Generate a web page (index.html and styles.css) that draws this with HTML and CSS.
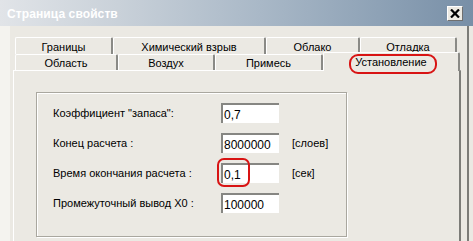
FILE: index.html
```html
<!DOCTYPE html>
<html lang="ru">
<head>
<meta charset="utf-8">
<title>Страница свойств</title>
<link rel="stylesheet" href="styles.css">
</head>
<body>
<div class="window">
  <div class="titlebar">
    <span class="title">Страница свойств</span>
    <span class="close"><svg width="10" height="9" viewBox="0 0 10 9"><path d="M1 0.5 L9 8.5 M9 0.5 L1 8.5" stroke="#000" stroke-width="2.2" fill="none"/></svg></span>
  </div>
  <div class="body">
    <div class="frame-left"></div>
    <div class="main">
      <div class="tabrow row1">
        <div class="tab w98">Границы</div>
        <div class="tab w153">Химический взрыв</div>
        <div class="tab w94">Облако</div>
        <div class="tab w97">Отладка</div>
      </div>
      <div class="tabrow row2">
        <div class="tab w103">Область</div>
        <div class="tab w97">Воздух</div>
        <div class="tab w108">Примесь</div>
        <div class="tab selected w137">Установление<span class="mark mark-tab"></span></div>
      </div>
      <div class="panel">
        <div class="group">
          <div class="form">
            <div class="label">Коэффициент "запаса":</div>
            <div class="field">0,7</div>
            <div class="unit"></div>

            <div class="label">Конец расчета :</div>
            <div class="field">8000000</div>
            <div class="unit">[слоев]</div>

            <div class="label">Время окончания расчета :</div>
            <div class="field">0,1<span class="mark mark-field"></span></div>
            <div class="unit">[сек]</div>

            <div class="label">Промежуточный вывод X0 :</div>
            <div class="field">100000</div>
            <div class="unit"></div>
          </div>
        </div>
      </div>
    </div>
    <div class="frame-gap"></div>
    <div class="frame-right"></div>
  </div>
</div>
</body>
</html>
```

FILE: styles.css
```css
html, body {
  margin: 0;
  padding: 0;
}
body {
  width: 473px;
  height: 241px;
  overflow: hidden;
  background: #ebe9e3;
  font-family: "Liberation Sans", Arial, sans-serif;
  font-size: 11px;
  color: #000;
}
.window {
  display: flex;
  flex-direction: column;
  height: 241px;
}
.titlebar {
  height: 26px;
  flex: 0 0 26px;
  display: flex;
  align-items: center;
  justify-content: space-between;
  padding: 0 10px 0 7px;
  background: linear-gradient(90deg, #e1e4e8 0%, #c9d1d9 25%, #a9b8c7 55%, #8ea2b6 80%, #788fa7 100%);
}
.title {
  color: #fff;
  font-weight: bold;
  font-size: 12px;
  letter-spacing: 0.1px;
  margin-top: 1px;
}
.close {
  width: 14px;
  height: 13px;
  display: flex;
  align-items: center;
  justify-content: center;
  background: #ece9e2;
  border-top: 1px solid #fff;
  border-left: 1px solid #fff;
  border-right: 1px solid #6f6f6f;
  border-bottom: 1px solid #6f6f6f;
  margin-top: 1px;
}
.body {
  flex: 1;
  display: flex;
  min-height: 0;
}
.frame-left {
  width: 10px;
  background: #f4f3ef;
  margin-right: 3px;
}
.main {
  width: 448px;
  padding-top: 11px;
  display: flex;
  flex-direction: column;
}
.tabrow {
  display: flex;
  padding-left: 2px;
}
.row1 {
  height: 17px;
}
.row2 {
  height: 16px;
  position: relative;
  z-index: 1;
}
.tab {
  box-sizing: border-box;
  display: flex;
  align-items: center;
  justify-content: center;
  border-top: 1px solid #fff;
  border-left: 1px solid #fff;
  border-right: 2px solid #8a8a86;
  border-radius: 2px 2px 0 0;
  background: #ebe9e3;
  padding-top: 1px;
}
.w98 { width: 98px; }
.w153 { width: 153px; }
.w94 { width: 94px; }
.w97 { width: 97px; }
.w103 { width: 103px; }
.w108 { width: 108px; }
.w137 { width: 137px; }
.tab.selected {
  position: relative;
  margin-top: -2px;
  height: 19px;
  margin-bottom: -1px;
  padding-top: 0;
}
.mark {
  position: absolute;
  box-sizing: border-box;
  border: 2px solid #d81414;
  pointer-events: none;
}
.mark-tab {
  left: 25px;
  top: 1px;
  width: 88px;
  height: 20px;
  border-radius: 9px;
}
.panel {
  flex: 1;
  box-sizing: border-box;
  border-top: 1px solid #fff;
  border-left: 1px solid #fff;
  border-right: 2px solid #7c7c78;
  padding: 21px 0 0 22px;
}
.group {
  box-sizing: border-box;
  width: 311px;
  height: 145px;
  border: 1px solid #a9a79f;
  box-shadow: inset 1px 1px 0 #fff, 1px 1px 0 #fff;
  padding: 10px 0 0 16px;
}
.form {
  display: grid;
  grid-template-columns: 168px 58px auto;
  grid-auto-rows: 20px;
  row-gap: 10px;
  align-items: center;
}
.label {
  white-space: nowrap;
  padding-bottom: 1px;
}
.field {
  position: relative;
  box-sizing: border-box;
  height: 20px;
  background: #fff;
  border-top: 2px solid #868682;
  border-left: 2px solid #868682;
  padding: 1px 0 0 1px;
  font-size: 12px;
  display: flex;
  align-items: center;
}
.mark-field {
  left: -6px;
  top: -7px;
  width: 33px;
  height: 29px;
  border-radius: 7px;
}
.unit {
  padding-left: 13px;
  padding-bottom: 1px;
}
.frame-gap {
  width: 6px;
}
.frame-right {
  width: 2px;
  background: #7c7c78;
}
```
